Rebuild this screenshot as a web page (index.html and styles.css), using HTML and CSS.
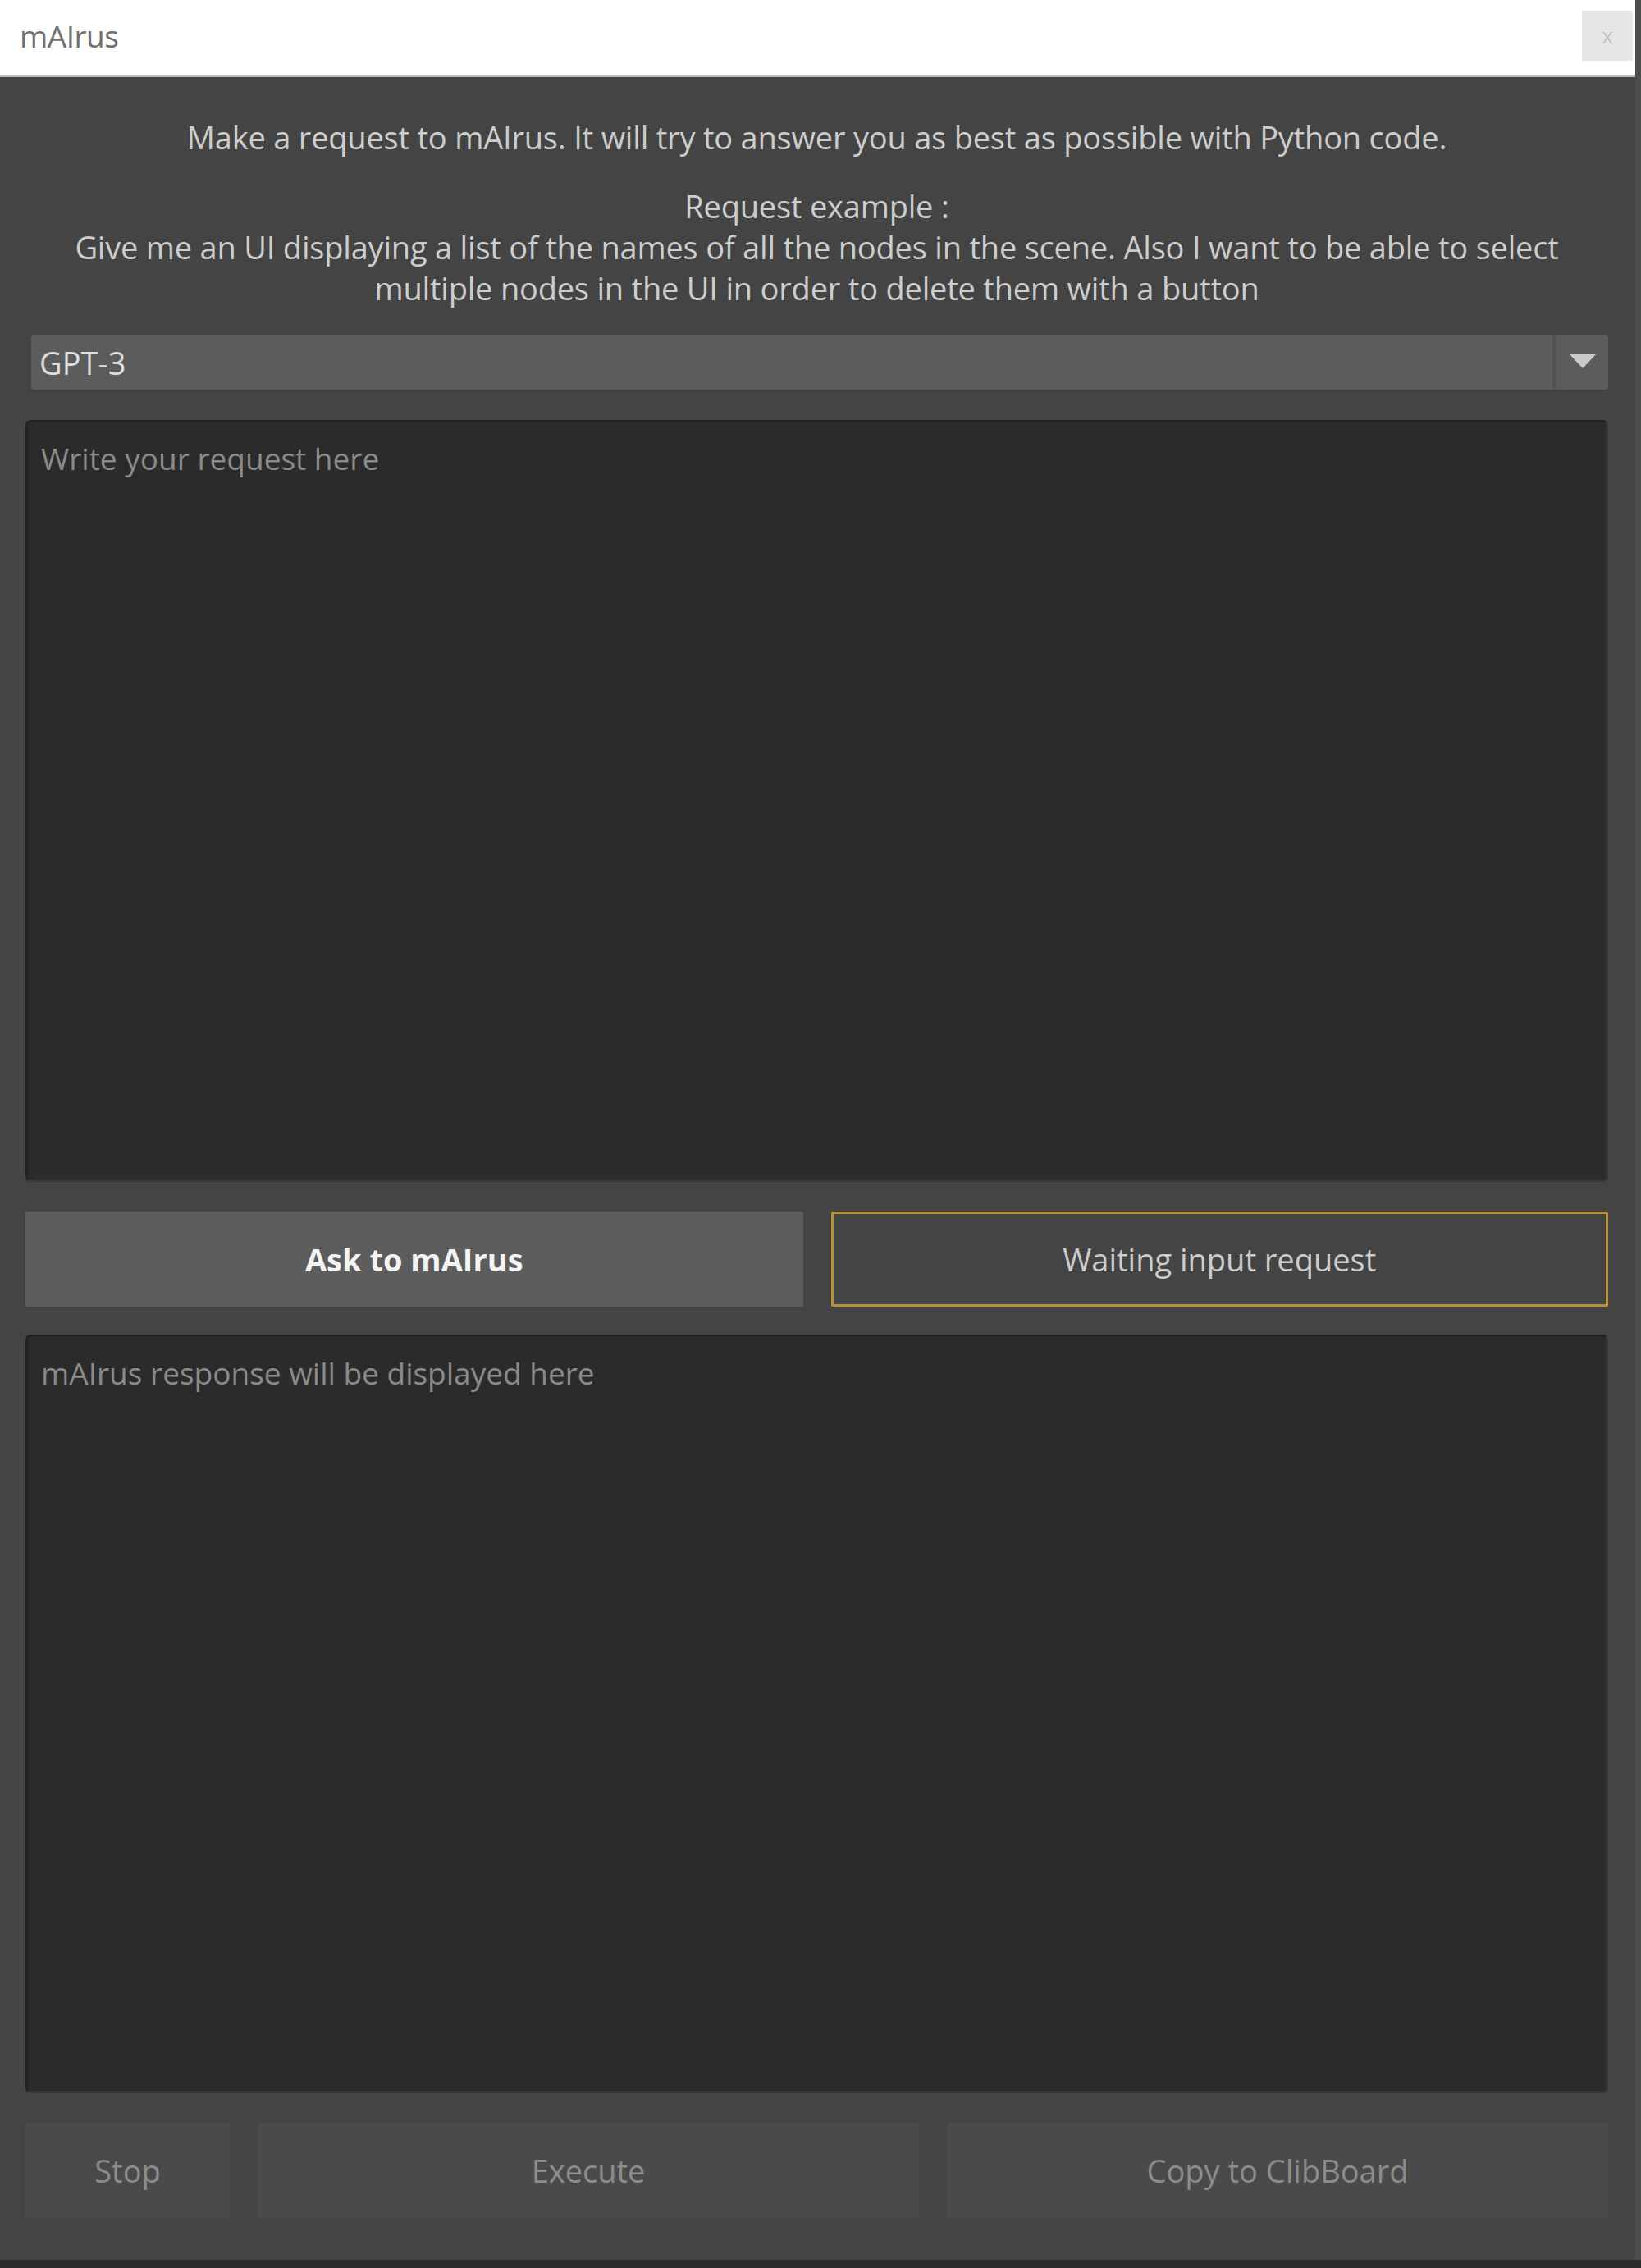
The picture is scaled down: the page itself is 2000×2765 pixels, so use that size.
FILE: index.html
```html
<!DOCTYPE html>
<html lang="en">
<head>
<meta charset="utf-8">
<title>mAIrus</title>
<link rel="stylesheet" href="styles.css">
</head>
<body>
<div class="screen">
  <div class="window">
    <div class="titlebar">
      <span class="title">mAIrus</span>
      <div class="close">x</div>
    </div>
    <div class="content">
      <div class="intro">
        <p class="intro-line">Make a request to mAIrus. It will try to answer you as best as possible with Python code.</p>
        <p class="intro-example">Request example :<br>Give me an UI displaying a list of the names of all the nodes in the scene. Also I want to be able to select<br>multiple nodes in the UI in order to delete them with a button</p>
      </div>
      <div class="combo">
        <div class="combo-text">GPT-3</div>
        <div class="combo-sep"></div>
        <div class="combo-arrow">
          <svg width="32" height="17" viewBox="0 0 32 17"><path d="M0 0 H32 L16 17 Z" fill="#c9c9c9"/></svg>
        </div>
      </div>
      <div class="textbox request"><span class="placeholder">Write your request here</span></div>
      <div class="action-row">
        <div class="btn btn-ask">Ask to mAIrus</div>
        <div class="btn btn-status">Waiting input request</div>
      </div>
      <div class="textbox response"><span class="placeholder">mAIrus response will be displayed here</span></div>
      <div class="bottom-row">
        <div class="btn btn-disabled btn-stop">Stop</div>
        <div class="btn btn-disabled btn-grow">Execute</div>
        <div class="btn btn-disabled btn-grow">Copy to ClibBoard</div>
      </div>
    </div>
  </div>
  <div class="side-strip"></div>
</div>
</body>
</html>
```

FILE: styles.css
```css
* { box-sizing: border-box; }

html, body {
  margin: 0;
  padding: 0;
}

body {
  background: #2a2a2a;
  width: 2000px;
  height: 2765px;
  overflow: hidden;
  font-family: "Open Sans", "Noto Sans", "DejaVu Sans", sans-serif;
}

.screen {
  display: flex;
  height: 2755px;
}

.window {
  width: 1993px;
  display: flex;
  flex-direction: column;
}

.side-strip {
  flex: 1;
  background: #4c4c4c;
}

.titlebar {
  height: 94px;
  background: #ffffff;
  border-bottom: 3px solid #bdbdbd;
  display: flex;
  align-items: center;
  justify-content: space-between;
  padding-left: 24px;
  padding-right: 3px;
}

.title {
  font-size: 37px;
  letter-spacing: -0.5px;
  color: #707070;
  margin-top: -4px;
}

.close {
  width: 62px;
  height: 61px;
  background: #e6e6e6;
  color: #c4c4c4;
  font-size: 26px;
  display: flex;
  align-items: center;
  justify-content: center;
  margin-top: -5px;
}

.content {
  flex: 1;
  background: #444444;
  padding: 48px 33px 50px 31px;
  display: flex;
  flex-direction: column;
}

.intro {
  text-align: center;
  color: #cdcdcd;
  font-size: 38px;
  letter-spacing: -0.2px;
  line-height: 50px;
}

.intro p {
  margin: 0;
}

.intro-example {
  margin-top: 34px !important;
}

.combo {
  margin-top: 32px;
  margin-left: 7px;
  height: 67px;
  display: flex;
  background: #5c5c5c;
  border-radius: 4px;
  overflow: hidden;
}

.combo-text {
  flex: 1;
  display: flex;
  align-items: center;
  padding-left: 10px;
  font-size: 38px;
  color: #dedede;
}

.combo-sep {
  width: 5px;
  background: #535353;
}

.combo-arrow {
  width: 63px;
  display: flex;
  align-items: center;
  justify-content: center;
  padding-bottom: 2px;
}

.textbox {
  background: #2b2b2b;
  border: 3px solid #232323;
  border-right-color: #383838;
  border-bottom-color: #383838;
  border-radius: 6px;
  padding: 19px 16px;
  font-size: 37px;
  line-height: 50px;
}

.request {
  margin-top: 37px;
  height: 929px;
}

.response {
  margin-top: 34px;
  height: 925px;
}

.placeholder {
  color: #8a8a8a;
}

.action-row {
  margin-top: 36px;
  height: 116px;
  display: grid;
  grid-template-columns: 1fr 1fr;
  gap: 34px;
}

.btn {
  display: flex;
  align-items: center;
  justify-content: center;
  font-size: 38px;
}

.btn-ask {
  background: #5d5d5d;
  color: #f4f4f4;
  font-weight: 700;
  border-radius: 2px;
}

.btn-status {
  background: #444444;
  border: 3px solid #b8932f;
  color: #cccccc;
  border-radius: 2px;
}

.bottom-row {
  margin-top: 36px;
  height: 116px;
  display: flex;
  gap: 34px;
}

.btn-disabled {
  background: #4a4a4a;
  color: #8c8c8c;
}

.btn-stop {
  width: 249px;
}

.btn-grow {
  flex: 1;
}
```
